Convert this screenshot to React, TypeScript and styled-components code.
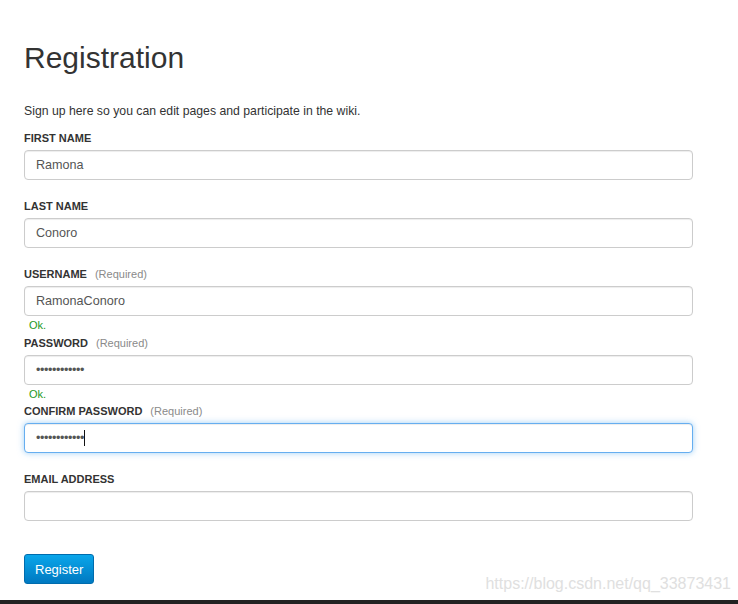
import React from "react";
import styled, { createGlobalStyle, css } from "styled-components";

const GlobalStyle = createGlobalStyle`
  html, body {
    margin: 0;
    padding: 0;
    background: #ffffff;
    font-family: "Liberation Sans", Arial, Helvetica, sans-serif;
    color: #333333;
  }
  * { box-sizing: border-box; }
`;

const Page = styled.div`
  position: relative;
  height: 604px;
  display: flex;
  flex-direction: column;
  overflow: hidden;
`;

const Main = styled.main`
  padding: 40px 0 0 24px;
  width: 693px;
`;

const Title = styled.h1`
  margin: 0;
  font-size: 30px;
  line-height: 36px;
  font-weight: normal;
  color: #333333;
`;

const Intro = styled.p`
  margin: 26px 0 10px;
  font-size: 12.25px;
  line-height: 18px;
  color: #333333;
`;

const Form = styled.form`
  display: flex;
  flex-direction: column;
`;

const Field = styled.div`
  display: flex;
  flex-direction: column;
`;

const Label = styled.label`
  display: flex;
  align-items: baseline;
  gap: 8px;
  font-size: 11px;
  line-height: 16px;
  font-weight: bold;
  text-transform: uppercase;
  color: #333333;
  margin-bottom: 4px;
`;

const Required = styled.span`
  font-weight: normal;
  text-transform: none;
  color: #8a8a8a;
  font-size: 11px;
`;

const InputWrap = styled.div`
  position: relative;
`;

const Input = styled.input<{ $focused?: boolean; $secret?: boolean }>`
  display: block;
  width: 100%;
  height: 30px;
  padding: 0 11px;
  font-family: "Liberation Sans", Arial, Helvetica, sans-serif;
  font-size: 12.6px;
  color: #555555;
  background: #ffffff;
  border: 1px solid #cccccc;
  border-radius: 4px;
  box-shadow: inset 0 1px 1px rgba(0, 0, 0, 0.075);
  outline: none;
  letter-spacing: ${(p) => (p.$secret ? "-0.4px" : "normal")};
  ${(p) =>
    p.$focused &&
    css`
      border-color: #66aef0;
      box-shadow: inset 0 1px 1px rgba(0, 0, 0, 0.075),
        0 0 6px rgba(82, 168, 236, 0.55);
    `}
`;

const Caret = styled.span`
  position: absolute;
  left: 60px;
  top: 7px;
  width: 1px;
  height: 16px;
  background: #111111;
`;

const Help = styled.div<{ $ok?: boolean }>`
  height: 18.2px;
  line-height: 18px;
  font-size: 11px;
  padding-left: 5px;
  color: ${(p) => (p.$ok ? "#1e9a1e" : "transparent")};
`;

const Actions = styled.div`
  margin-top: 15px;
`;

const Button = styled.button`
  height: 30px;
  padding: 0 10px;
  font-family: "Liberation Sans", Arial, Helvetica, sans-serif;
  font-size: 13px;
  color: #ffffff;
  background: linear-gradient(to bottom, #0aa6ea, #0079c1);
  border: 1px solid #006cad;
  border-radius: 3px;
  cursor: pointer;
`;

const Footer = styled.footer`
  margin-top: 16px;
  flex: 1;
  background: #222222;
`;

const Watermark = styled.div`
  position: absolute;
  right: 7px;
  top: 574px;
  font-family: "Liberation Sans", Arial, sans-serif;
  font-size: 16px;
  line-height: 20px;
  color: #e0e0e0;
  pointer-events: none;
`;

type FieldDef = {
  label: string;
  value: string;
  type?: string;
  required?: boolean;
  ok?: boolean;
  focused?: boolean;
};

const fields: FieldDef[] = [
  { label: "First name", value: "Ramona" },
  { label: "Last name", value: "Conoro" },
  { label: "Username", value: "RamonaConoro", required: true, ok: true },
  { label: "Password", value: "ramonaconoro", type: "password", required: true, ok: true },
  { label: "Confirm password", value: "ramonaconoro", type: "password", required: true, focused: true },
  { label: "Email address", value: "" },
];

export default function App() {
  return (
    <Page>
      <GlobalStyle />
      <Main>
        <Title>Registration</Title>
        <Intro>Sign up here so you can edit pages and participate in the wiki.</Intro>
        <Form onSubmit={(e) => e.preventDefault()}>
          {fields.map((f) => (
            <Field key={f.label}>
              <Label>
                {f.label}
                {f.required && <Required>(Required)</Required>}
              </Label>
              <InputWrap>
                <Input
                  type={f.type ?? "text"}
                  value={f.value}
                  readOnly
                  $focused={f.focused}
                  $secret={f.type === "password"}
                />
                {f.focused && <Caret />}
              </InputWrap>
              <Help $ok={f.ok}>{f.ok ? "Ok." : "\u00a0"}</Help>
            </Field>
          ))}
          <Actions>
            <Button type="submit">Register</Button>
          </Actions>
        </Form>
      </Main>
      <Footer />
      <Watermark>https://blog.csdn.net/qq_33873431</Watermark>
    </Page>
  );
}
